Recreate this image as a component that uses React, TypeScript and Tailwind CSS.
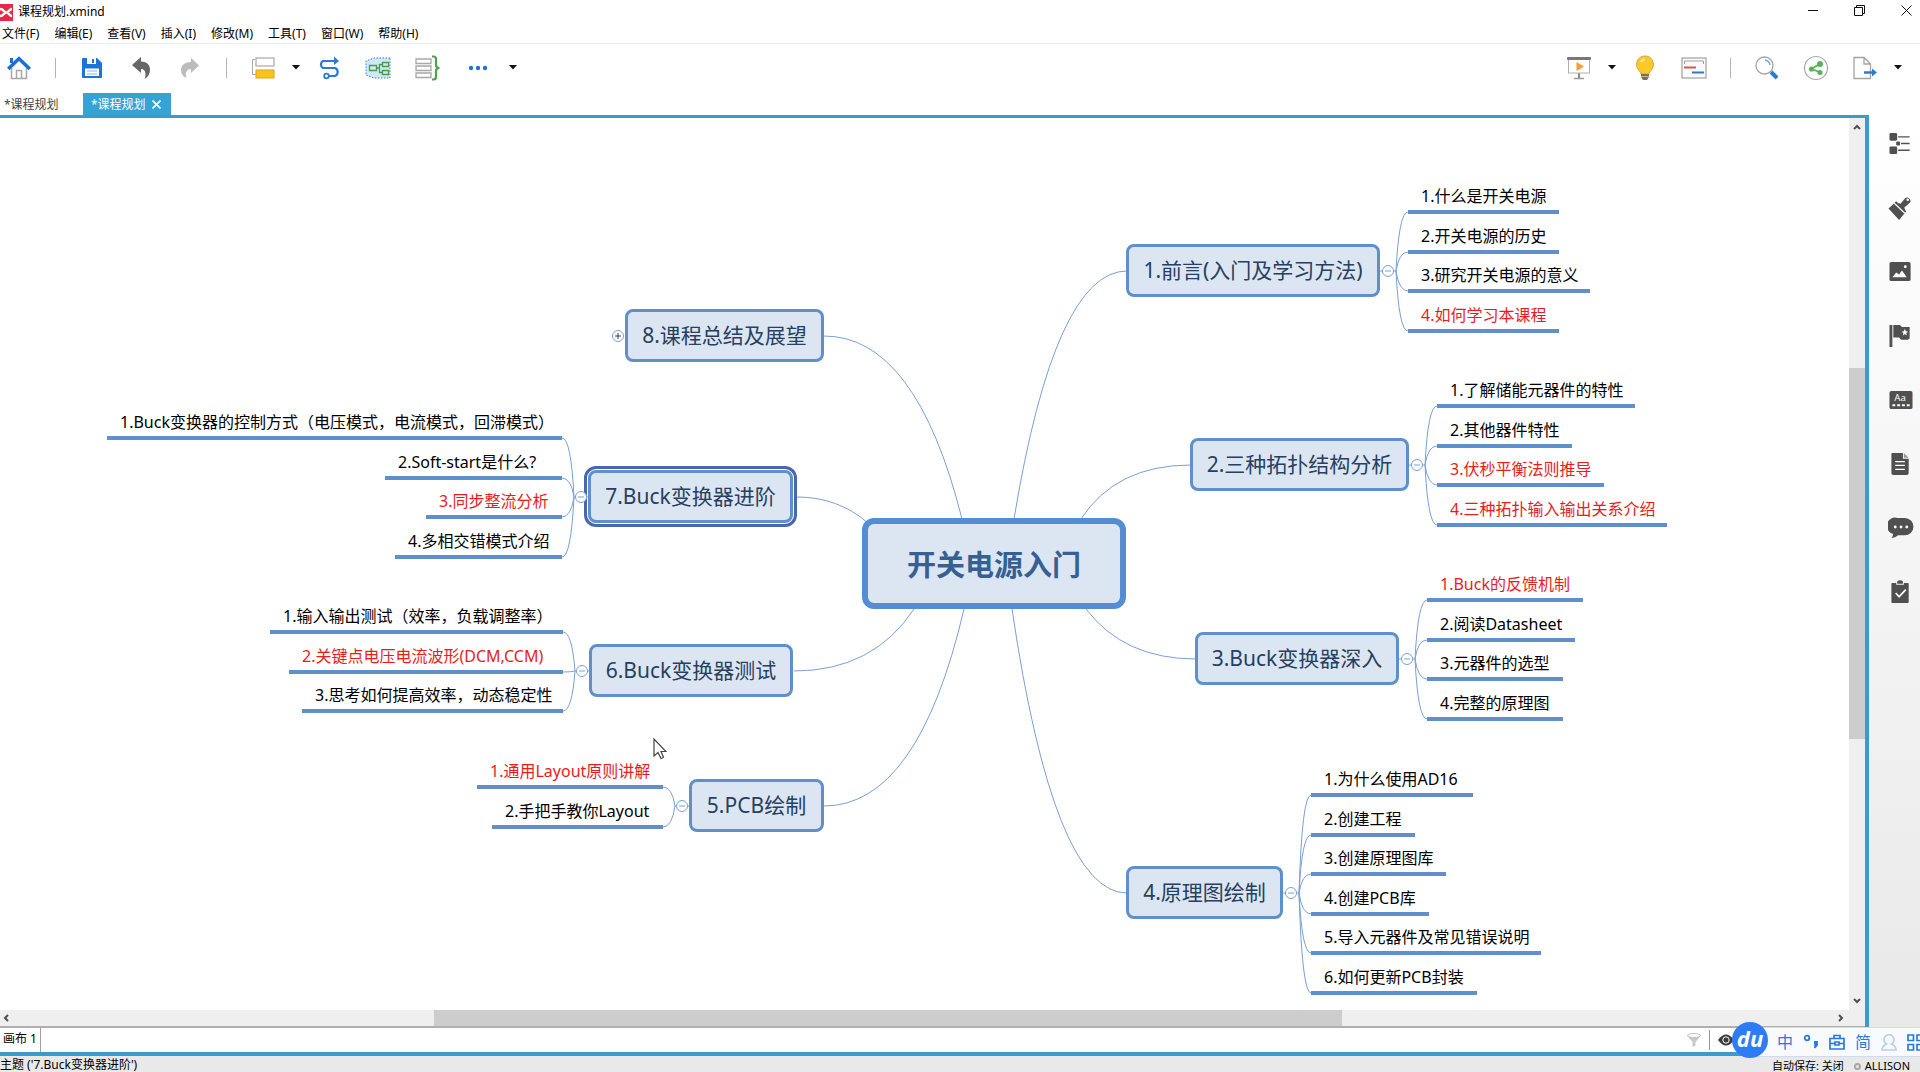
import React, { useState } from 'react';
import clsx from 'clsx';

const FONT = "font-['Noto_Sans','Noto_Sans_CJK_SC',sans-serif]";

type Leaf = { text: string; w: number; red?: boolean };
type Branch = {
  id: number;
  title: string;
  side: 'left' | 'right';
  x: number;
  y: number;
  w: number;
  // link from the central topic to this branch
  link: string;
  leafEdge: number;
  leafTop: number;
  collapsed?: boolean;
  leaves: Leaf[];
};

const NODE_HEIGHT = 53;
const LEAF_HEIGHT = 32;

const BRANCHES: Branch[] = [
  {
    id: 1, title: '1.前言(入门及学习方法)', side: 'right', x: 1126, y: 126, w: 254,
    link: 'M1014 401Q1055 153 1127 153', leafEdge: 1408, leafTop: 94,
    leaves: [
      { text: '1.什么是开关电源', w: 151 },
      { text: '2.开关电源的历史', w: 151 },
      { text: '3.研究开关电源的意义', w: 182 },
      { text: '4.如何学习本课程', w: 151, red: true },
    ],
  },
  {
    id: 2, title: '2.三种拓扑结构分析', side: 'right', x: 1190, y: 320, w: 219,
    link: 'M1081 401Q1116 347 1191 347', leafEdge: 1437, leafTop: 288,
    leaves: [
      { text: '1.了解储能元器件的特性', w: 198 },
      { text: '2.其他器件特性', w: 135 },
      { text: '3.伏秒平衡法则推导', w: 167, red: true },
      { text: '4.三种拓扑输入输出关系介绍', w: 230, red: true },
    ],
  },
  {
    id: 3, title: '3.Buck变换器深入', side: 'right', x: 1195, y: 514, w: 204,
    link: 'M1086 491Q1124 541 1196 541', leafEdge: 1427, leafTop: 482,
    leaves: [
      { text: '1.Buck的反馈机制', w: 156, red: true },
      { text: '2.阅读Datasheet', w: 148 },
      { text: '3.元器件的选型', w: 136 },
      { text: '4.完整的原理图', w: 136 },
    ],
  },
  {
    id: 4, title: '4.原理图绘制', side: 'right', x: 1126, y: 748, w: 157,
    link: 'M1012 491Q1054 775 1127 775', leafEdge: 1311, leafTop: 677,
    leaves: [
      { text: '1.为什么使用AD16', w: 162 },
      { text: '2.创建工程', w: 104 },
      { text: '3.创建原理图库', w: 135 },
      { text: '4.创建PCB库', w: 118 },
      { text: '5.导入元器件及常见错误说明', w: 230 },
      { text: '6.如何更新PCB封装', w: 166 },
    ],
  },
  {
    id: 5, title: '5.PCB绘制', side: 'left', x: 689, y: 661, w: 135,
    link: 'M964 491Q918 688 824 688', leafEdge: 663, leafTop: 669,
    leaves: [
      { text: '1.通用Layout原则讲解', w: 186, red: true },
      { text: '2.手把手教你Layout', w: 171 },
    ],
  },
  {
    id: 6, title: '6.Buck变换器测试', side: 'left', x: 589, y: 526, w: 204,
    link: 'M914 491Q873 553 794 553', leafEdge: 563, leafTop: 514,
    leaves: [
      { text: '1.输入输出测试（效率，负载调整率）', w: 293 },
      { text: '2.关键点电压电流波形(DCM,CCM)', w: 274, red: true },
      { text: '3.思考如何提高效率，动态稳定性', w: 261 },
    ],
  },
  {
    id: 7, title: '7.Buck变换器进阶', side: 'left', x: 588, y: 352, w: 205,
    link: 'M868 405Q838 379 797 379', leafEdge: 562, leafTop: 320,
    leaves: [
      { text: '1.Buck变换器的控制方式（电压模式，电流模式，回滞模式）', w: 455 },
      { text: '2.Soft-start是什么?', w: 177 },
      { text: '3.同步整流分析', w: 136, red: true },
      { text: '4.多相交错模式介绍', w: 167 },
    ],
  },
  {
    id: 8, title: '8.课程总结及展望', side: 'left', x: 625, y: 191, w: 199,
    link: 'M962 401Q916 218 824 218', leafEdge: 0, leafTop: 0, collapsed: true,
    leaves: [],
  },
];

const leafY = (b: Branch, i: number) => Math.round(b.leafTop + i * 39.6);

function leafLink(b: Branch, i: number) {
  const dir = b.side === 'right' ? 1 : -1;
  const cy = b.y + 27;
  const y = leafY(b, i);
  const join = b.leafEdge - dir * 12;
  return `M${join} ${cy}Q${join + dir * 3} ${y} ${b.leafEdge} ${y}`;
}

function MindMap() {
  const [selected, setSelected] = useState(7);

  return (
    <div className="relative min-w-0 flex-1 overflow-hidden bg-white">
      {/* free canvas, topics sit at their own coordinates */}
      <svg className="absolute left-0 top-0" width="1850" height="891" fill="none" stroke="#7ba0d4">
        {BRANCHES.map((b) => (
          <g key={b.id}>
            <path d={b.link} />
            {b.leaves.map((leaf, i) => (
              <path key={leaf.text} d={leafLink(b, i)} />
            ))}
            {b.leaves.length > 0 && (
              <path
                d={
                  b.side === 'right'
                    ? `M${b.x + b.w} ${b.y + 27}H${b.leafEdge - 12}`
                    : `M${b.x} ${b.y + 27}H${b.leafEdge + 12}`
                }
              />
            )}
          </g>
        ))}
      </svg>

      <div
        className="absolute flex items-center justify-center rounded-xl border-6 border-[#558dd4] bg-[#dce6f2] pt-0.5 text-[29px] font-bold text-[#376092]"
        style={{ left: 862, top: 400, width: 264, height: 91 }}
      >
        开关电源入门
      </div>

      {BRANCHES.map((b) => (
        <React.Fragment key={b.id}>
          <button
            type="button"
            onClick={() => setSelected(b.id)}
            className={clsx(
              'absolute flex items-center justify-center whitespace-nowrap rounded-lg border-3 border-[#5f90cc] bg-[#dce6f2] pb-px text-[21px] leading-7 text-[#254061]',
              selected === b.id && 'outline-3 outline-offset-1 outline-[#4867ae]'
            )}
            style={{ left: b.x, top: b.y, width: b.w, height: NODE_HEIGHT }}
          >
            {b.title}
          </button>
          <button
            type="button"
            aria-label={b.collapsed ? '展开' : '折叠'}
            className="absolute flex size-3 items-center justify-center rounded-full border border-[#7ba0d4] bg-white"
            style={{ left: b.side === 'right' ? b.x + b.w + 2 : b.x - 13, top: b.y + 21 }}
          >
            <svg width="6" height="6" stroke={b.collapsed ? '#254061' : '#7ba0d4'}>
              <path d={b.collapsed ? 'M0 3H6M3 0V6' : 'M0 3H6'} />
            </svg>
          </button>
          {b.leaves.map((leaf, i) => (
            <div
              key={leaf.text}
              className={clsx(
                'absolute flex items-center whitespace-nowrap border-b-4 border-[#5f90cc] pb-px pl-[13px] text-base',
                leaf.red ? 'text-[#e81c1c]' : 'text-black'
              )}
              style={{
                left: b.side === 'right' ? b.leafEdge : b.leafEdge - leaf.w,
                top: leafY(b, i) - LEAF_HEIGHT + 2,
                width: leaf.w,
                height: LEAF_HEIGHT,
              }}
            >
              {leaf.text}
            </div>
          ))}
        </React.Fragment>
      ))}

      <svg className="absolute left-[653px] top-[620px]" width="14" height="22" fill="#fff" stroke="#444" strokeWidth="1.2">
        <path d="M1 1V18L5 14.5L8 20.5L10.5 19.3L8 13.5H13Z" />
      </svg>
    </div>
  );
}

const MENUS = ['文件(F)', '编辑(E)', '查看(V)', '插入(I)', '修改(M)', '工具(T)', '窗口(W)', '帮助(H)'];

function TitleBar() {
  return (
    <header className="bg-white text-xs text-black">
      <div className="flex h-6 items-center justify-between">
        <div className="flex items-center gap-[5px]">
          <svg width="13" height="17">
            <rect width="13" height="17" fill="#ea2846" />
            <path d="M0 5C4 5 3 8 6 8.500S9 5 12 5M0 12C4 12 3 9 6 8.500S9 12 12 12" fill="none" stroke="#fff" strokeWidth="2.400" />
          </svg>
          <h1>课程规划.xmind</h1>
        </div>
        <div className="flex items-center gap-9 pb-1 pr-2">
          <button type="button" aria-label="最小化">
            <svg width="10" height="11" stroke="#111"><path d="M0 5.500H10" /></svg>
          </button>
          <button type="button" aria-label="还原">
            <svg width="11" height="11" fill="none" stroke="#111"><path d="M.5 2.500H8.500V10.500H.5ZM2.500 2.500V.5H10.500V8.500H8.500" /></svg>
          </button>
          <button type="button" aria-label="关闭">
            <svg width="11" height="11" stroke="#111"><path d="M.5 .5L10.500 10.500M10.500 .5L.5 10.500" /></svg>
          </button>
        </div>
      </div>
      <nav className="flex h-5 items-center gap-[15px] border-b border-[#ececec] pl-[2px]">
        {MENUS.map((m) => (
          <button key={m} type="button">{m}</button>
        ))}
      </nav>
    </header>
  );
}

function ToolButton({ label, children }: { label: string; children: React.ReactNode }) {
  return (
    <button type="button" aria-label={label} className="flex size-9 items-center justify-center">
      {children}
    </button>
  );
}

function Caret() {
  return (
    <button type="button" aria-label="更多选项" className="-mx-1.5 flex h-9 w-4 items-center justify-center">
      <svg width="8" height="5" fill="#111"><path d="M0 0H8L4 4.500Z" /></svg>
    </button>
  );
}

const Divider = () => <div className="mx-[5px] h-5 w-px bg-[#b5b5b5]" />;

function Toolbar() {
  return (
    <div className="flex h-[49px] items-center justify-between bg-white pb-0.5 pl-px pr-5">
      <div className="flex items-center gap-[13px]">
        <ToolButton label="主页">
          <svg width="24" height="24" fill="none">
            <path d="M4.500 11V22.500H19.500V11L12 4Z" fill="#fff" stroke="#a8a8a8" strokeWidth="1.500" />
            <path d="M9.500 22.500V14.500H14.500V22.500" stroke="#a8a8a8" strokeWidth="1.500" />
            <path d="M4.500 2V7" stroke="#1c6fd2" strokeWidth="3" />
            <path d="M1.200 13L12 2.500L22.800 13" stroke="#1c6fd2" strokeWidth="3.400" />
          </svg>
        </ToolButton>
        <Divider />
        <ToolButton label="保存">
          <svg width="20" height="20">
            <path d="M1 0H15L20 5V19A1 1 0 0 1 19 20H1A1 1 0 0 1 0 19V1A1 1 0 0 1 1 0Z" fill="#1c74d8" />
            <path d="M5 0H14V6H5ZM3 10.500H17V18H3Z" fill="#fff" />
            <path d="M10 1H12V5H10Z" fill="#1c74d8" />
            <path d="M5 13H15M5 16H15" stroke="#8ab4e6" />
          </svg>
        </ToolButton>
        <ToolButton label="撤销">
          <svg width="18" height="22" fill="#666">
            <path d="M0 8L9 0V4.500C15 4.500 18 8 18 13C18 17 16 20 12.500 22C14 19 14.500 12 9 12V16Z" />
          </svg>
        </ToolButton>
        <ToolButton label="重做">
          <svg width="18" height="20" fill="#bcbcbc">
            <path d="M18 7.500L10 0V4C4 4 0 7 0 12C0 16 2 18.500 5.500 20C4 16 5 11 10 11V15Z" />
          </svg>
        </ToolButton>
        <Divider />
        <ToolButton label="主题">
          <svg width="24" height="22" fill="none">
            <path d="M4 2.500H1.500V17.500H5" stroke="#a8a8a8" />
            <rect x="5" y="1" width="18" height="8" fill="#fff" stroke="#a8a8a8" strokeWidth="1.200" />
            <rect x="5" y="13" width="18" height="8" fill="#fbc31c" stroke="#dca51a" />
          </svg>
        </ToolButton>
        <Caret />
        <ToolButton label="联系">
          <svg width="24" height="24" fill="none" stroke="#2b7bd6" strokeWidth="2.200">
            <path d="M21 5H6A4 4 0 0 0 6 12H18A4.300 4.300 0 0 1 18 20H12" />
            <path d="M17 .5L22 5L17 9Z" fill="#2b7bd6" stroke="none" />
            <circle cx="9.500" cy="20" r="2.300" strokeWidth="1.800" />
          </svg>
        </ToolButton>
        <ToolButton label="外框">
          <svg width="26" height="22" fill="none">
            <path d="M25 1L9 1L1 4V18L9 21H25Z" fill="#d0e8f8" stroke="#3a7fd0" strokeDasharray="1.500 1.500" />
            <path d="M4.500 8.500H11.500V13.500H4.500ZM17.500 5.500H23.500V9.500H17.500ZM17.500 13.500H23.500V17.500H17.500ZM11.500 11H14.500M17.500 7.500H14.500V15.500H17.500" stroke="#4a9a4e" strokeWidth="1.300" />
          </svg>
        </ToolButton>
        <div className="flex items-center gap-[15px]">
          <ToolButton label="概要">
            <svg width="26" height="26" fill="none">
              <path d="M2 4H17V8.500H2ZM2 11H17V15.500H2ZM2 18H17V22.500H2Z" stroke="#a8a8a8" strokeWidth="1.300" />
              <path d="M18 1.500H19.500Q22 1.500 22 4V10Q22 13 25.500 13Q22 13 22 16V22Q22 24.500 19.500 24.500H18" stroke="#4aa34e" strokeWidth="2.200" />
            </svg>
          </ToolButton>
          <ToolButton label="更多">
            <svg width="20" height="6" fill="#2672cc">
              <circle cx="3" cy="3" r="2.200" /><circle cx="10" cy="3" r="2.200" /><circle cx="17" cy="3" r="2.200" />
            </svg>
          </ToolButton>
          <Caret />
        </div>
      </div>

      <div className="flex items-center gap-[13px]">
        <ToolButton label="演示">
          <svg width="24" height="24">
            <path d="M12 17V22" stroke="#8a8a8a" strokeWidth="2" />
            <path d="M7 22.500H17" stroke="#9a9a9a" strokeWidth="1.500" />
            <rect x="1.500" y="3" width="21" height="14" fill="#fff" stroke="#b0b0b0" />
            <rect y="1" width="24" height="3" rx="1" fill="#777" />
            <path d="M9.500 6V15L17 10.500Z" fill="#f0a02c" />
          </svg>
        </ToolButton>
        <Caret />
        <ToolButton label="头脑风暴">
          <svg width="20" height="26">
            <path d="M10 1A8.500 8.500 0 0 0 3.500 15C5 16.500 6 17.500 6 19H14C14 17.500 15 16.500 16.500 15A8.500 8.500 0 0 0 10 1Z" fill="#fcc92c" stroke="#dba52c" />
            <path d="M6 7C7 5 8.500 4.500 10 4.500" fill="none" stroke="#ffeaa0" strokeWidth="2" />
            <path d="M6 19H14V22L12 25H8L6 22Z" fill="#77705c" />
            <path d="M6 21.500H14" stroke="#c4b88c" />
          </svg>
        </ToolButton>
        <ToolButton label="甘特图">
          <svg width="26" height="22" fill="none">
            <rect x="1" y="1" width="24" height="20" fill="#fafafa" stroke="#a0a0a0" strokeWidth="1.200" />
            <path d="M3.500 7V4H22.500V7" stroke="#a0a0a0" />
            <path d="M3 10.500H15" stroke="#cc5a55" strokeWidth="2" />
            <path d="M11 15.500H23" stroke="#2b7bd6" strokeWidth="2" />
          </svg>
        </ToolButton>
        <Divider />
        <ToolButton label="搜索">
          <svg width="24" height="24" fill="none">
            <path d="M16 16L22 22" stroke="#2b7bd6" strokeWidth="4" />
            <circle cx="9.500" cy="9.500" r="8.500" fill="#fff" stroke="#a4a4a4" strokeWidth="1.300" />
            <path d="M10 4A6 6 0 0 1 15 9" stroke="#6aa5e4" strokeWidth="1.300" />
          </svg>
        </ToolButton>
        <ToolButton label="分享">
          <svg width="26" height="26">
            <circle cx="13" cy="13" r="11.500" fill="#fff" stroke="#a8a8a8" strokeWidth="1.200" />
            <path d="M16.500 9L8.500 14L16.500 17" fill="none" stroke="#57b257" strokeWidth="1.800" />
            <g fill="#57b257"><circle cx="17" cy="9" r="3" /><circle cx="8.500" cy="14" r="2.600" /><circle cx="17" cy="17.500" r="2.500" /></g>
          </svg>
        </ToolButton>
        <ToolButton label="导出">
          <svg width="26" height="24" fill="none">
            <path d="M2 1.500H12L18.500 8V22.500H2ZM12 1.500V8H18.500" stroke="#a4a4a4" strokeWidth="1.300" fill="#fff" />
            <path d="M12 16.500H21" stroke="#2b7bd6" strokeWidth="2.500" />
            <path d="M20 12.500L25 16.500L20 20.500Z" fill="#2b7bd6" />
          </svg>
        </ToolButton>
        <Caret />
      </div>
    </div>
  );
}

function EditorTabs() {
  return (
    <div className="flex h-[22px] bg-white text-xs">
      <button type="button" className="w-[83px] pl-1 pt-0.5 text-left text-[#444]">*课程规划</button>
      <div className="flex w-[88px] items-center justify-between bg-[#36a3d7] pl-2 pr-[10px] text-white">
        <button type="button" className="pt-0.5">*课程规划</button>
        <button type="button" aria-label="关闭标签">
          <svg width="9" height="9" stroke="#fff" strokeWidth="1.600"><path d="M.5 .5L8.500 8.500M8.500 .5L.5 8.500" /></svg>
        </button>
      </div>
    </div>
  );
}

function Chevron({ d }: { d: string }) {
  return (
    <svg width="8" height="8" fill="none" stroke="#505050" strokeWidth="2"><path d={d} /></svg>
  );
}

const PANELS: { label: string; icon: React.ReactNode }[] = [
  {
    label: '大纲',
    icon: (
      <>
        <rect x="1" y="1" width="8" height="8" rx="1.500" /><rect x="1" y="15" width="8" height="8" rx="1.500" /><rect x="8" y="10" width="4" height="4" rx="1" />
        <path d="M10 4.300H22V5.700H10ZM13 11.300H22V12.700H13ZM10 18.300H22V19.700H10Z" />
      </>
    ),
  },
  {
    label: '格式',
    icon: (
      <>
        <path d="M0 13L8 5.500L18.500 16L11 25Z" />
        <path d="M9 7L12.500 8L17.500 2A3.700 3.700 0 0 1 22.700 6.500L16.500 12L17.500 16Z" />
        <path d="M5.500 7L17 18" stroke="#f8f8f8" strokeWidth="1.300" />
        <circle cx="20" cy="4" r="1.300" fill="#fff" />
      </>
    ),
  },
  {
    label: '图片',
    icon: (
      <>
        <rect x="1" y="2" width="22" height="20" rx="2" />
        <path d="M4 18L8 13L11 15L14 11L19 18Z" fill="#fff" /><circle cx="17.500" cy="7" r="1.500" fill="#fff" />
      </>
    ),
  },
  {
    label: '标记',
    icon: (
      <>
        <path d="M1 1H4V24H1Z" /><path d="M5 1H12L14 3H22V15L20 16.500H13L11 14H5Z" />
        <path d="M17 5L18 7.500L20.500 8L18.500 9.500L19 12L17 10.500L15 12L15.500 9.500L13.500 8L16 7.500Z" fill="#fff" />
      </>
    ),
  },
  {
    label: '字体',
    icon: (
      <>
        <rect x="1" y="3" width="24" height="19" rx="2" />
        <text x="6" y="14" fill="#fff" fontSize="10">Aa</text>
        <path d="M4 18H22" stroke="#fff" strokeWidth="2" strokeDasharray="3 2" />
      </>
    ),
  },
  {
    label: '备注',
    icon: (
      <>
        <path d="M4 1H15V7H21V22Q21 24 19 24H5Q3 24 3 22V2Q3 1 4 1Z" /><path d="M16 1L21 6H16Z" fill="#999" />
        <path d="M7 10H17M7 14H17M7 18H17" stroke="#fff" strokeWidth="1.300" />
      </>
    ),
  },
  {
    label: '批注',
    icon: (
      <>
        <path d="M9 2H17A8 8 0 0 1 17 20H10Q7 22.500 3 23Q5 21 4.500 18.500A8.500 8.500 0 0 1 9 2Z" />
        <g fill="#fff"><circle cx="7" cy="11.500" r="1.500" /><circle cx="13" cy="11.500" r="1.500" /><circle cx="19" cy="11.500" r="1.500" /></g>
      </>
    ),
  },
  {
    label: '任务',
    icon: (
      <>
        <path d="M4 3H8V5H16V3H20Q21 3 21 4V23Q21 24 20 24H4Q3 24 3 23V4Q3 3 4 3Z" /><path d="M9 1.500Q12 -1 15 1.500V4H9Z" />
        <path d="M7.500 13.500L11 17.500L18 10" stroke="#fff" strokeWidth="1.800" fill="none" />
      </>
    ),
  },
];

function SidePanel() {
  return (
    <aside className="flex w-[51px] flex-col items-end gap-10 bg-linear-to-b from-white via-[#f4f4f4] to-[#e8e8e8] pr-[6px] pt-[17px]">
      {PANELS.map((p) => (
        <button key={p.label} type="button" aria-label={p.label}>
          <svg className="block" width="26" height="24" viewBox="0 0 26 25" fill="#505050">{p.icon}</svg>
        </button>
      ))}
    </aside>
  );
}

function ImeBar() {
  return (
    <div className="absolute bottom-[15px] right-0 flex h-[30px] w-[170px] items-center justify-between border-y border-[#cfdcf0] bg-[#f8fafe] pl-[27px] text-base text-[#2b78dc]">
      <button
        type="button"
        className="absolute -left-[18px] -top-[6px] flex size-9 items-center justify-center rounded-full bg-[#2d7cf6] pb-1 text-[22px] font-bold italic text-white"
      >
        du
      </button>
      <button type="button">中</button>
      <button type="button" aria-label="标点">
        <svg width="16" height="16" fill="none" stroke="#2b78dc" strokeWidth="1.800">
          <circle cx="4" cy="4" r="2.300" />
          <path d="M11 8H14V11L11.500 14" fill="#2b78dc" />
        </svg>
      </button>
      <button type="button" aria-label="工具箱">
        <svg width="16" height="16" fill="none" stroke="#2b78dc" strokeWidth="1.700">
          <path d="M1 4.500H15V15H1ZM5 4V1.500H11V4M1 9.500H6M10 9.500H15M6 8V11H10V8Z" />
        </svg>
      </button>
      <button type="button">简</button>
      <button type="button" aria-label="用户">
        <svg width="16" height="17" fill="none" stroke="#b8cdf0" strokeWidth="1.700">
          <path d="M5.500 10A5 5 0 1 1 10.500 10Q15 12 15 16H1Q1 12 5.500 10Z" />
        </svg>
      </button>
      <button type="button" aria-label="菜单">
        <svg className="block" width="13" height="17" fill="none" stroke="#2b78dc" strokeWidth="1.700">
          <path d="M1 1H6.500V6.500H1ZM1 10.500H6.500V16H1ZM10 1H15V6.500H10ZM10 10.500H15V16H10Z" />
        </svg>
      </button>
    </div>
  );
}

export default function App() {
  return (
    <div className={clsx(FONT, 'relative flex h-screen flex-col overflow-hidden bg-white')}>
      <TitleBar />
      <Toolbar />
      <EditorTabs />

      <div className="flex min-h-0 flex-1">
        <main className="flex min-w-0 flex-1 flex-col border-y-4 border-r-4 border-t-3 border-[#3b9ccb]">
          <div className="flex min-h-0 flex-1">
            <MindMap />
            <div className="flex w-4 flex-col items-center justify-between bg-[#efefef] py-[5px]">
              <Chevron d="M1 6L4 3L7 6" />
              <div className="mt-[237px] h-[371px] w-4 bg-[#cdcdcd]" />
              <div className="flex-1" />
              <Chevron d="M1 2L4 5L7 2" />
            </div>
          </div>
          <div className="flex h-4 items-center bg-[#efefef] pl-[2px] pr-5">
            <Chevron d="M6 1L3 4L6 7" />
            <div className="ml-[23%] h-4 w-[49.3%] bg-[#cdcdcd]" />
            <div className="flex-1" />
            <Chevron d="M2 1L5 4L2 7" />
          </div>
          <div className="flex h-[26px] items-center border-t-2 border-[#b0b0b0] bg-white text-xs">
            <button type="button" className="h-full w-[41px] border-r border-[#a0a0a0] pb-0.5">画布 1</button>
            <div className="flex-1" />
            <div className="flex items-center gap-2 pr-[131px]">
              <svg width="14" height="15" fill="#c8c8c8">
                <path d="M0 2.500L5.500 9V14L8.500 12.500V9L14 2.500Z" /><ellipse cx="7" cy="2.500" rx="6.500" ry="2" fill="#fff" stroke="#c0c0c0" />
              </svg>
              <div className="h-5 w-px bg-[#999]" />
              <svg width="16" height="12">
                <path d="M0 6Q8 -5 16 6Q8 17 0 6Z" fill="#3c3c3c" /><circle cx="8" cy="6" r="3.200" fill="none" stroke="#fff" />
              </svg>
            </div>
          </div>
        </main>
        <SidePanel />
      </div>

      <footer className="flex h-4 justify-between bg-[#e9e9e9] text-black">
        <span className="text-xs leading-[18px]">主题 ('7.Buck变换器进阶')</span>
        <div className="flex h-5 items-center gap-2.5 pr-[10px] text-[11px]">
          <span>自动保存: 关闭</span>
          <div className="flex items-center gap-1">
            <span className="size-[7px] rounded-full border-2 border-[#a8a8a8]" />
            <span>ALLISON</span>
          </div>
        </div>
      </footer>

      <ImeBar />
    </div>
  );
}
